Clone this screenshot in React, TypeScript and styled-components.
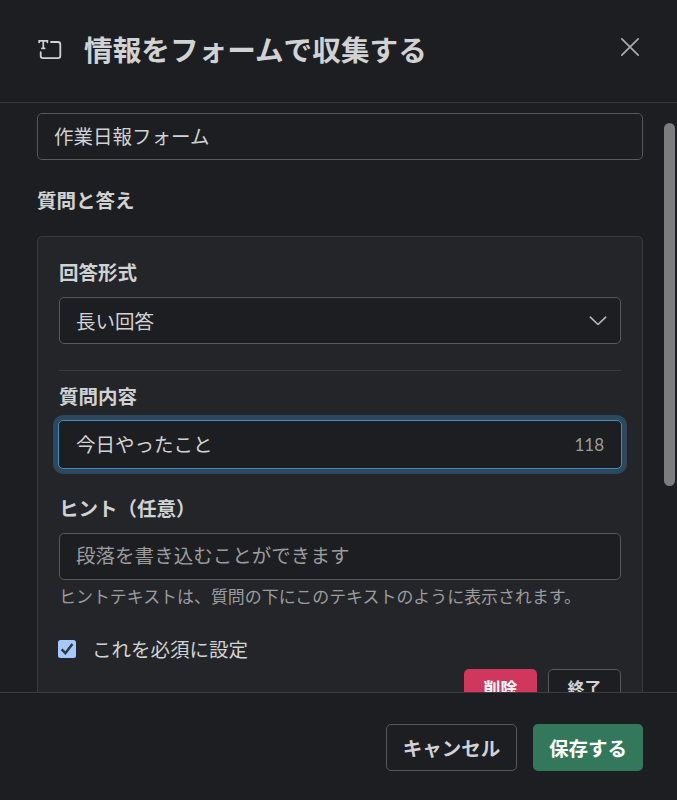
import { useState } from 'react'
import styled, { createGlobalStyle, css } from 'styled-components'

const GlobalStyle = createGlobalStyle`
    * {
        box-sizing: border-box;
    }

    body {
        margin: 0;
        background: #1d1e21;
    }

    body,
    input,
    button {
        font-family: Lato, 'Noto Sans CJK JP', sans-serif;
    }
`

const Modal = styled.div`
    position: relative;
    display: flex;
    flex-direction: column;
    width: 677px;
    height: 800px;
    overflow: hidden;
    background: #1d1e21;
    color: #d1d2d3;
    font-size: 19.5px;
`

const Header = styled.header`
    display: flex;
    align-items: center;
    flex: none;
    height: 103px;
    padding: 0 36px 4px 37px;
    border-bottom: 1px solid #36373b;
`

const Title = styled.h1`
    flex: 1;
    margin: 2px 0 0 21px;
    font-size: 28.65px;
    line-height: 38px;
    font-weight: 700;
    white-space: nowrap;
`

const CloseButton = styled.button`
    display: flex;
    margin: 0 0 5px;
    padding: 0;
    color: #ababad;
    background: none;
    border: none;
`

const Body = styled.div`
    flex: 1;
    min-height: 0;
    padding: 10px 34px 0 37px;
    overflow: hidden;
`

const field = css`
    display: flex;
    align-items: center;
    width: 100%;
    height: 47px;
    padding: 0 16px;
    color: #d1d2d3;
    background: #1d1e21;
    border: 1px solid #56585c;
    border-radius: 5px;
    font-size: 19.5px;
`

const TextInput = styled.input`
    ${field}
    padding-bottom: 2px;
    outline: none;

    &::placeholder {
        color: #9b9c9e;
        font-size: 19.55px;
        opacity: 1;
    }
`

const Select = styled.button`
    ${field}
    justify-content: space-between;
    padding-right: 12px;
`

const CountedInput = styled.div`
    ${field}
    width: auto;
    height: 49px;
    margin: 0 -1px;
    padding: 0 17px;
    border: 1.3px solid #3c8ec7;
    box-shadow: 0 0 0 5px #2d475b;

    input {
        flex: 1;
        min-width: 0;
        padding: 0 0 2px;
        color: inherit;
        font-size: inherit;
        background: none;
        border: none;
        outline: none;
    }
`

const Counter = styled.span`
    color: #9b9c9e;
    font-size: 17px;
`

const Label = styled.div<{ $top: number; $bottom: number }>`
    margin: ${({ $top }) => $top}px 0 ${({ $bottom }) => $bottom}px;
    line-height: 28px;
    font-weight: 700;
`

const Card = styled.section`
    height: 520px;
    padding: 0 21px;
    background: #242529;
    border: 1px solid #3a3b3f;
    border-radius: 5px;
    display: flow-root;
`

const Divider = styled.hr`
    height: 1px;
    margin: 26px 0 0;
    background: #393a3e;
    border: none;
`

const Hint = styled.p`
    margin: 5px 0 0;
    color: #9b9c9e;
    font-size: 16.95px;
    line-height: 24px;
    white-space: nowrap;
`

const CheckRow = styled.label`
    display: flex;
    align-items: center;
    gap: 16px;
    height: 28px;
    margin: 25px 0 0 -1px;
`

const CheckBox = styled.span`
    display: flex;
    width: 18px;
    height: 18px;
    margin-top: 2px;
    background: #a4c8ff;
    border-radius: 2.5px;
`

const Actions = styled.div`
    display: flex;
    justify-content: flex-end;
    gap: 11px;
    margin-top: 7px;
`

const Footer = styled.footer`
    display: flex;
    justify-content: flex-end;
    flex: none;
    gap: 16px;
    height: 108px;
    padding: 31px 34px 0;
    border-top: 1px solid #3a3b3f;
`

const fills = {
    outline: css`
        color: #d1d2d3;
        background: #1d1e21;
        border: 1px solid #56585c;
    `,
    danger: css`
        color: #fff;
        background: #cf375c;
        border: none;
    `,
    primary: css`
        color: #fff;
        background: #33785a;
        border: none;
    `,
}

const Button = styled.button<{ $kind: keyof typeof fills; $width: number; $small?: boolean }>`
    width: ${({ $width }) => $width}px;
    height: ${({ $small }) => ($small ? 36 : 47)}px;
    padding: 0;
    font-size: ${({ $small }) => ($small ? 16.9 : 19.5)}px;
    font-weight: 700;
    white-space: nowrap;
    border-radius: 5px;
    ${({ $kind }) => fills[$kind]}
`

const ScrollThumb = styled.div`
    position: absolute;
    top: 123px;
    right: 2px;
    width: 11px;
    height: 363px;
    background: #7c7d7e;
    border-radius: 6px;
`

const FormIcon = () => (
    <svg width="26" height="26" viewBox="0 0 26 26" fill="none" stroke="#d1d2d3" strokeLinecap="round">
        <path d="M2.2 6.3V4.8h8.2v1.5M6.3 4.9v7.2M4.9 12.3h2.8" strokeWidth="1.7" />
        <path
            d="M14 6h6.9a2.4 2.4 0 0 1 2.4 2.4v11.3a2.4 2.4 0 0 1-2.4 2.4H6.1a2.4 2.4 0 0 1-2.4-2.4v-3.5"
            strokeWidth="1.8"
        />
    </svg>
)

const CloseIcon = () => (
    <svg width="22" height="22" viewBox="0 0 22 22" fill="none" stroke="currentColor">
        <path d="M2.8 2.8l16.4 16.4M19.2 2.8L2.8 19.2" strokeWidth="1.7" strokeLinecap="round" />
    </svg>
)

const ChevronIcon = () => (
    <svg width="20" height="12" viewBox="0 0 20 12" fill="none" stroke="#b9babd">
        <path d="M2.3 2.2l7.7 7.3 7.7-7.3" strokeWidth="1.6" strokeLinecap="round" strokeLinejoin="round" />
    </svg>
)

const CheckIcon = () => (
    <svg width="18" height="18" viewBox="0 0 18 18" fill="none" stroke="#35373c">
        <path d="M3.6 9.3l3.8 3.9 7-9.1" strokeWidth="2.5" />
    </svg>
)

export default function App() {
    const [formName, setFormName] = useState('作業日報フォーム')
    const [question, setQuestion] = useState('今日やったこと')

    return (
        <>
            <GlobalStyle />
            <Modal>
                <Header>
                    <FormIcon />
                    <Title>情報をフォームで収集する</Title>
                    <CloseButton>
                        <CloseIcon />
                    </CloseButton>
                </Header>
                <Body>
                    <TextInput value={formName} onChange={(e) => setFormName(e.target.value)} />
                    <Label $top={27} $bottom={21}>
                        質問と答え
                    </Label>
                    <Card>
                        <Label $top={22} $bottom={10}>
                            回答形式
                        </Label>
                        <Select>
                            長い回答
                            <ChevronIcon />
                        </Select>
                        <Divider />
                        <Label $top={12} $bottom={9}>
                            質問内容
                        </Label>
                        <CountedInput>
                            <input value={question} onChange={(e) => setQuestion(e.target.value)} />
                            <Counter>{125 - question.length}</Counter>
                        </CountedInput>
                        <Label $top={26} $bottom={10}>
                            ヒント（任意）
                        </Label>
                        <TextInput placeholder="段落を書き込むことができます" />
                        <Hint>ヒントテキストは、質問の下にこのテキストのように表示されます。</Hint>
                        <CheckRow>
                            <CheckBox>
                                <CheckIcon />
                            </CheckBox>
                            これを必須に設定
                        </CheckRow>
                        <Actions>
                            <Button $kind="danger" $width={73} $small>
                                削除
                            </Button>
                            <Button $kind="outline" $width={73} $small>
                                終了
                            </Button>
                        </Actions>
                    </Card>
                </Body>
                <Footer>
                    <Button $kind="outline" $width={131}>
                        キャンセル
                    </Button>
                    <Button $kind="primary" $width={110}>
                        保存する
                    </Button>
                </Footer>
                <ScrollThumb />
            </Modal>
        </>
    )
}
